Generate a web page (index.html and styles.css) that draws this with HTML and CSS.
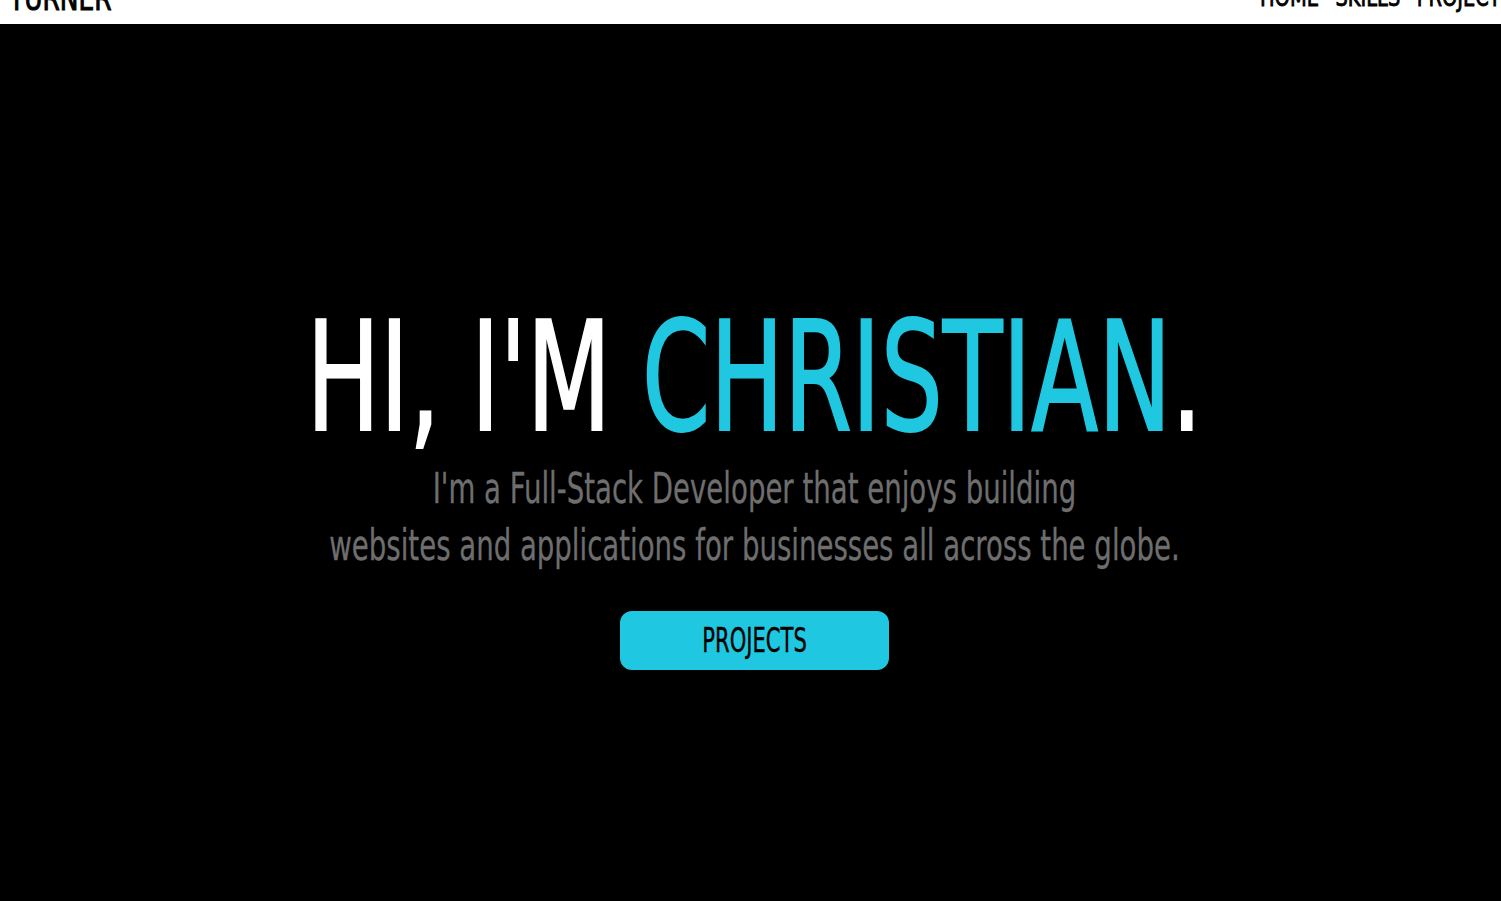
FILE: index.html
```html
<!DOCTYPE html>
<html lang="en">
<head>
<meta charset="utf-8">
<title>Christian Turner</title>
<link rel="stylesheet" href="styles.css">
</head>
<body>
<header class="site-header">
  <div class="header-inner">
    <div class="logo"><span class="logo-text">TURNER</span></div>
    <nav class="nav">
      <a class="nav-link" href="#">HOME</a>
      <a class="nav-link" href="#">SKILLS</a>
      <a class="nav-link" href="#">PROJECTS</a>
    </nav>
  </div>
</header>
<section class="hero">
  <h1 class="hero-title"><span class="t-white">HI, I'M </span><span class="t-cyan">CHRISTIAN</span><span class="t-white">.</span></h1>
  <p class="hero-sub">I'm a Full-Stack Developer that enjoys building<br>websites and applications for businesses all across the globe.</p>
  <a class="btn" href="#"><span class="btn-text">PROJECTS</span></a>
</section>
</body>
</html>
```
FILE: styles.css
```css
* { box-sizing: border-box; }
html, body { margin: 0; padding: 0; }
body {
  background: #000;
  font-family: "DejaVu Sans", "Liberation Sans", sans-serif;
  font-stretch: condensed;
  overflow: hidden;
  height: 901px;
}
.site-header {
  height: 24px;
  background: #fff;
  overflow: hidden;
}
.header-inner {
  display: grid;
  grid-template-columns: 1260px 1fr;
  align-items: start;
}
.logo {
  margin-top: -19px;
  padding-left: 9px;
  font-size: 34px;
  line-height: 1;
  color: #000;
  white-space: nowrap;
}
.logo-text {
  display: inline-block;
  transform: scaleX(0.815);
  transform-origin: left center;
  -webkit-text-stroke: 1px #000;
}
.nav {
  display: flex;
  gap: 20px;
  margin-top: -16px;
  transform: scaleX(0.83);
  transform-origin: left center;
  white-space: nowrap;
}
.nav-link {
  color: #000;
  text-decoration: none;
  font-size: 26px;
  line-height: 1;
  -webkit-text-stroke: 0.8px #000;
}
.hero {
  display: flex;
  flex-direction: column;
  align-items: center;
  padding-top: 278px;
  padding-left: 8px;
}
.hero-title {
  margin: 0;
  font-weight: 400;
  font-size: 152px;
  line-height: 152px;
  white-space: nowrap;
  transform: scaleX(0.715);
}
.t-white { color: #fff; -webkit-text-stroke: 2px #fff; }
.t-cyan { color: #1fc8e0; -webkit-text-stroke: 2px #1fc8e0; }
.hero-sub {
  margin: 6px 0 0;
  color: #6e6e6e;
  font-size: 42px;
  line-height: 57px;
  text-align: center;
  white-space: nowrap;
  transform: scaleX(0.73);
  -webkit-text-stroke: 0.3px #6e6e6e;
}
.btn {
  margin-top: 37px;
  display: flex;
  align-items: center;
  justify-content: center;
  width: 269px;
  height: 59px;
  background: #1fc8e0;
  border-radius: 12px;
  color: #000;
  text-decoration: none;
  font-size: 33px;
}
.btn-text {
  display: inline-block;
  white-space: nowrap;
  transform: scaleX(0.71);
  -webkit-text-stroke: 0.4px #000;
}
```
